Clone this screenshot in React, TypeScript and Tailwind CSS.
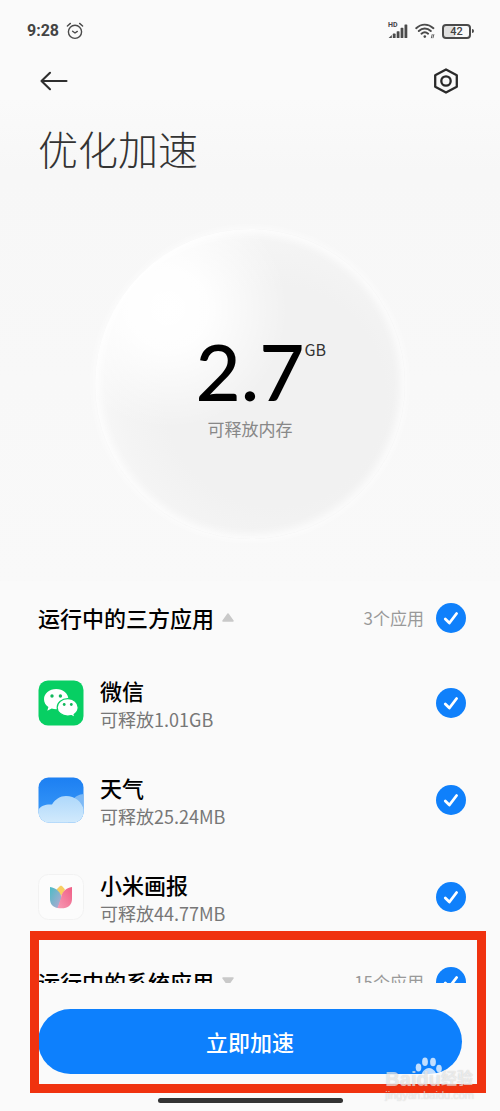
import React, { useState } from 'react';

interface AppItem {
  id: string;
  name: string;
  size: string;
  icon: React.ReactNode;
}

function AlarmIcon() {
  return (
    <svg viewBox="0 0 18 18" className="w-[18px] h-[18px]" fill="none" stroke="#4a4a4a" strokeWidth="1.4" strokeLinecap="round">
      <circle cx="9" cy="9.8" r="6.6" />
      <path d="M6.6 9.2 9 11l2.3-1.6M1.4 4 4.4 1.4M16.6 4 13.6 1.4" />
    </svg>
  );
}

function SignalIcon() {
  return (
    <svg viewBox="0 0 20 16" className="w-5 h-4" fill="#4a4a4a">
      <path d="M0.6 15 3.8 12v3z" />
      <rect x="4.8" y="10.6" width="2.8" height="4.4" rx="0.6" />
      <rect x="8.7" y="8.2" width="2.8" height="6.8" rx="0.6" />
      <rect x="12.6" y="4.8" width="2.8" height="10.2" rx="0.6" />
      <rect x="16.5" y="1.5" width="2.8" height="13.5" rx="0.6" />
    </svg>
  );
}

function WifiIcon() {
  return (
    <svg viewBox="0 0 20 16" className="w-5 h-4" fill="none" stroke="#4a4a4a" strokeWidth="1.9" strokeLinecap="round">
      <path d="M1.2 5.2C6.2.4 13.2.4 18.4 5.2M3.8 8c3.5-3.3 8.5-3.3 12 0M6.5 10.7c2-1.9 4.6-1.9 6.6 0" />
      <circle cx="9.8" cy="13.6" r="1.3" fill="#4a4a4a" stroke="none" />
      <path d="M16.4 14.8l.8-3.2M18 14.8l.8-3.2" strokeWidth="0.9" />
    </svg>
  );
}

function WeChatIcon() {
  return (
    <svg viewBox="0 0 46 46" className="size-[46px] shrink-0">
      <rect x="0.5" y="0.5" width="45" height="45" rx="9.5" fill="#07cf63" />
      <path
        d="M18.2 9C11.3 9 6 13.5 6 19.2c0 3.2 1.7 6 4.4 7.9l-1.1 3.6 4.4-2.2c1.4.4 2.9.7 4.5.7 6.8 0 12.2-4.5 12.2-10S25 9 18.2 9z"
        fill="#fff"
      />
      <circle cx="14" cy="16" r="1.7" fill="#12b85c" />
      <circle cx="22.4" cy="16" r="1.7" fill="#12b85c" />
      <path
        d="M29.8 18.7c-6 0-10.6 3.9-10.6 8.7s4.6 8.7 10.6 8.7c1.3 0 2.5-.2 3.6-.5l3.5 1.9-.8-3.1c2.5-1.7 4.1-4.2 4.1-7 0-4.8-4.7-8.7-10.4-8.7z"
        fill="#fff"
        stroke="#07cf63"
        strokeWidth="1.2"
      />
      <circle cx="26.2" cy="24.5" r="1.4" fill="#12b85c" />
      <circle cx="33.3" cy="24.5" r="1.4" fill="#12b85c" />
    </svg>
  );
}

function WeatherIcon() {
  return (
    <svg viewBox="0 0 46 46" className="size-[46px] shrink-0">
      <defs>
        <linearGradient id="sky" x1="0" y1="0" x2="0" y2="1">
          <stop offset="0" stopColor="#1c7ff2" />
          <stop offset="1" stopColor="#3d9cf8" />
        </linearGradient>
        <linearGradient id="cloud" x1="0" y1="0" x2="0" y2="1">
          <stop offset="0" stopColor="#aed8fb" />
          <stop offset="1" stopColor="#d2eafc" />
        </linearGradient>
        <clipPath id="weatherClip">
          <rect x="0.5" y="0.5" width="45" height="45" rx="10" />
        </clipPath>
      </defs>
      <g clipPath="url(#weatherClip)">
        <rect width="46" height="46" fill="url(#sky)" />
        <path d="M34 24c2-4 7-7 12-7v29H30z" fill="#7db9f5" />
        <path d="M0 33c3-4.5 8-6 14-5.500 3.500-5.500 8-8.500 14-8.500 9 0 15.500 5.500 18 14v13H0z" fill="url(#cloud)" />
      </g>
    </svg>
  );
}

function GalleryIcon() {
  return (
    <svg viewBox="0 0 46 46" className="size-[46px] shrink-0">
      <defs>
        <linearGradient id="petalLeft" x1="0" y1="0" x2="1" y2="1">
          <stop offset="0" stopColor="#4bbcc6" />
          <stop offset="1" stopColor="#b9a9d2" />
        </linearGradient>
        <linearGradient id="petalRight" x1="1" y1="0" x2="0" y2="1">
          <stop offset="0" stopColor="#ef5f86" />
          <stop offset="1" stopColor="#f79ab4" />
        </linearGradient>
      </defs>
      <rect x="0.5" y="0.5" width="45" height="45" rx="10" fill="#fcfcfc" stroke="#f2f2f2" />
      <path d="M23 11.5c2 1.3 3.5 2.9 4 4.5L23 22l-4.5-6c.8-1.6 2.4-3.2 4.5-4.5z" fill="#f8ce62" />
      <path d="M12 13c6 1 11 5 11.5 11L20 34c-5-.5-8-4-8-9z" fill="url(#petalLeft)" />
      <path d="M34 13c-6 1-10.500 5-11 11l-3.500 10c9 1.500 14.500-2 14.500-9z" fill="url(#petalRight)" />
    </svg>
  );
}

const USER_APPS: AppItem[] = [
  { id: 'wechat', name: '微信', size: '1.01GB', icon: <WeChatIcon /> },
  { id: 'weather', name: '天气', size: '25.24MB', icon: <WeatherIcon /> },
  { id: 'gallery', name: '小米画报', size: '44.77MB', icon: <GalleryIcon /> },
];

interface CheckProps {
  id: string;
  label?: string;
  checked: boolean;
  onChange: (checked: boolean) => void;
}

function Check({ id, label, checked, onChange }: CheckProps) {
  return (
    <span className="grid size-[30px] shrink-0 place-items-center">
      <input
        id={id}
        type="checkbox"
        aria-label={label}
        checked={checked}
        onChange={(e) => onChange(e.target.checked)}
        className="col-start-1 row-start-1 size-[30px] appearance-none rounded-full bg-gray-200 checked:bg-[#0f80fb]"
      />
      <svg
        viewBox="0 0 30 30"
        className="pointer-events-none col-start-1 row-start-1 size-[30px]"
        fill="none"
        stroke="#fff"
        strokeWidth="2.8"
        strokeLinecap="round"
        strokeLinejoin="round"
      >
        <path d="M9.3 16 13.4 20 20.6 10.5" />
      </svg>
    </span>
  );
}

interface SectionHeaderProps {
  id: string;
  title: string;
  count: number;
  open: boolean;
  onToggle: () => void;
  checked: boolean;
  onCheck: (checked: boolean) => void;
}

function SectionHeader({ id, title, count, open, onToggle, checked, onCheck }: SectionHeaderProps) {
  return (
    <div className="flex h-[73px] items-center">
      <button type="button" onClick={onToggle} aria-expanded={open} className="flex items-center gap-2 text-[22px] font-medium text-black">
        {title}
        <svg viewBox="0 0 12 9" className={`h-[9px] w-3 ${open ? '' : 'rotate-180'}`}>
          <path d="M6 1 11 8H1z" fill="#c9c9c9" stroke="#c9c9c9" strokeWidth="1.5" strokeLinejoin="round" />
        </svg>
      </button>
      <span className="ml-auto mr-3 text-[17px] text-[#999]">{count}个应用</span>
      <Check id={id} label={title} checked={checked} onChange={onCheck} />
    </div>
  );
}

function Watermark() {
  return (
    <div className="pointer-events-none absolute right-[26px] bottom-[10px] flex flex-col font-['Liberation_Sans','Noto_Sans_CJK_SC',sans-serif] text-white/60 [text-shadow:0_0_1px_rgba(120,120,120,0.4)]">
      <svg viewBox="0 0 28 20" className="-mb-2 ml-[30px] h-5 w-7" fill="#fff" fillOpacity="0.75">
        <ellipse cx="3.5" cy="10.5" rx="2.8" ry="4" />
        <ellipse cx="10" cy="4.8" rx="2.9" ry="4.3" />
        <ellipse cx="18" cy="5" rx="2.9" ry="4.3" />
        <ellipse cx="24" cy="11.5" rx="2.8" ry="3.8" />
        <path d="M14 11c4 0 8 4.5 8 9H6c0-4.5 4-9 8-9z" />
      </svg>
      <span className="flex items-center text-[20px] leading-5 font-bold">
        Baidu<span className="text-[16px]">经验</span>
      </span>
      <span className="text-[11px] leading-3">jingyan.baidu.com</span>
    </div>
  );
}

export default function App() {
  const [selected, setSelected] = useState<string[]>(USER_APPS.map((a) => a.id));
  const [userOpen, setUserOpen] = useState(true);
  const [systemOpen, setSystemOpen] = useState(false);
  const [systemChecked, setSystemChecked] = useState(true);

  const toggleApp = (id: string, on: boolean) => {
    setSelected((prev) => (on ? [...prev, id] : prev.filter((x) => x !== id)));
  };

  return (
    <div className="flex h-screen flex-col overflow-hidden bg-[#fafafa] font-['Noto_Sans_CJK_SC',sans-serif]">
      {/* Status bar */}
      <div className="flex h-[62px] shrink-0 items-center pr-[26px] pl-[27px] text-[#444]">
        <span className="font-[Roboto,sans-serif] text-[16px] font-bold">9:28</span>
        <span className="ml-[7px]">
          <AlarmIcon />
        </span>
        <div className="ml-auto flex items-center gap-[7px]">
          <div className="relative">
            <span className="absolute -top-1 left-0 font-[Roboto,sans-serif] text-[7px] leading-3 font-bold">HD</span>
            <SignalIcon />
          </div>
          <WifiIcon />
          <div className="flex items-center gap-px">
            <span className="flex h-[15px] w-[29px] items-center justify-center rounded-[4px] border-2 border-[#4a4a4a] bg-linear-to-r from-[#e0e0e0] from-42% to-[#fafafa] to-42% font-[Roboto,sans-serif] text-[11px] leading-none font-medium">
              42
            </span>
            <span className="h-1 w-[2px] rounded-r bg-[#4a4a4a]" />
          </div>
        </div>
      </div>

      {/* Toolbar */}
      <header className="flex h-[38px] shrink-0 items-center justify-between px-[40px]">
        <button type="button" aria-label="返回">
          <svg viewBox="0 0 28 20" className="h-5 w-7" fill="none" stroke="#2e2e2e" strokeWidth="2.1" strokeLinecap="round" strokeLinejoin="round">
            <path d="M26.5 10H1.5M10 1.8 1.5 10l8.5 8.2" />
          </svg>
        </button>
        <button type="button" aria-label="设置">
          <svg viewBox="0 0 28 28" className="size-7" fill="none" stroke="#2a2a2a" strokeWidth="2.3" strokeLinejoin="round">
            <path d="M14 2.5 24.8 8.3v11.4L14 25.5 3.2 19.7V8.3z" />
            <circle cx="14" cy="14" r="4.7" />
          </svg>
        </button>
      </header>

      <main className="min-h-0 flex-1 overflow-y-auto [scrollbar-width:none]">
        <div className="bg-linear-to-b from-[#fafafa] via-[#f7f7f7] via-15% to-[#f9f9f9]">
          <h1 className="px-[38px] pt-[18px] text-[40px] leading-[60px] font-light text-[#333]">优化加速</h1>

          {/* Memory bubble */}
          <div className="flex justify-center pt-[51px] pb-[42px]">
            <div className="flex size-[310px] flex-col items-center rounded-full bg-[radial-gradient(circle_at_24%_26%,#ffffff_0%,rgba(255,255,255,0.9)_12%,rgba(255,255,255,0)_36%),radial-gradient(circle_at_58%_54%,#f1f1f1_0%,#f1f1f1_45%,#f4f4f4_62%,#fafafa_80%)] pt-[100px] shadow-[inset_0_0_10px_4px_rgba(255,255,255,0.8),0_0_8px_1px_rgba(255,255,255,0.7)]">
              <p className="relative mb-1 font-[Lato,sans-serif] text-[78px] leading-[84px] font-medium text-black">
                2.7
                <span className="absolute top-2 left-full font-['Noto_Sans_CJK_SC',sans-serif] text-[16px] leading-6 font-normal text-[#333]">GB</span>
              </p>
              <p className="text-[17px] leading-6 text-[#888]">可释放内存</p>
            </div>
          </div>
        </div>

        <section className="pr-[34px] pl-[38px]">
          <SectionHeader
            id="all-user"
            title="运行中的三方应用"
            count={USER_APPS.length}
            open={userOpen}
            onToggle={() => setUserOpen(!userOpen)}
            checked={selected.length === USER_APPS.length}
            onCheck={(on) => setSelected(on ? USER_APPS.map((a) => a.id) : [])}
          />
          {userOpen && (
            <ul>
              {USER_APPS.map((app) => (
                <li key={app.id} className="flex h-[97px] items-center">
                  {app.icon}
                  <label htmlFor={app.id} className="ml-4 flex flex-1 flex-col">
                    <span className="text-[22px] leading-8 font-medium text-black">{app.name}</span>
                    <span className="text-[18px] leading-[26px] text-[#777]">可释放{app.size}</span>
                  </label>
                  <Check id={app.id} checked={selected.includes(app.id)} onChange={(on) => toggleApp(app.id, on)} />
                </li>
              ))}
            </ul>
          )}
          <SectionHeader
            id="all-system"
            title="运行中的系统应用"
            count={15}
            open={systemOpen}
            onToggle={() => setSystemOpen(!systemOpen)}
            checked={systemChecked}
            onCheck={setSystemChecked}
          />
        </section>
      </main>

      {/* Bottom action */}
      <footer className="relative flex shrink-0 flex-col items-center px-[38px] pt-[26px] pb-2">
        <button type="button" className="h-[65px] w-full rounded-full bg-[#0d80fd] text-[22px] font-medium text-white">
          立即加速
        </button>
        <div className="mt-6 h-[5px] w-[185px] rounded-full bg-[#333]" />
        <div className="pointer-events-none absolute -top-[52px] right-[14px] bottom-[18px] left-[30px] border-[9px] border-[#f0320f]" />
        <Watermark />
      </footer>
    </div>
  );
}
